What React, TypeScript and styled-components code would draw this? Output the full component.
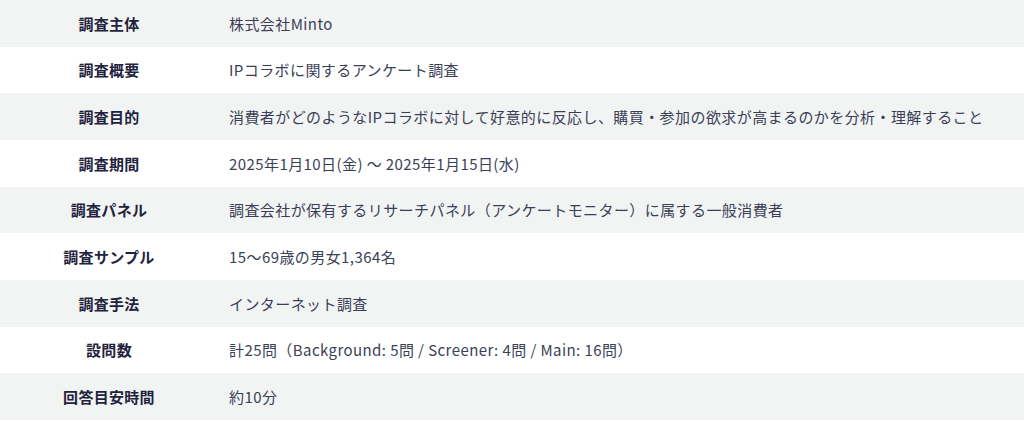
import * as React from 'react';
import styled, { createGlobalStyle } from 'styled-components';

const GlobalStyle = createGlobalStyle`
  html, body {
    margin: 0;
    padding: 0;
    background: #ffffff;
  }
  body {
    font-family: 'Noto Sans CJK JP', 'Noto Sans', sans-serif;
    color: #2c3049;
  }
`;

const Table = styled.div`
  width: 1024px;
  display: flex;
  flex-direction: column;
`;

const Row = styled.div<{ $shaded: boolean }>`
  display: grid;
  grid-template-columns: 218px 1fr;
  column-gap: 11px;
  align-items: center;
  height: 46.67px;
  background: ${(p) => (p.$shaded ? '#f2f3f3' : '#ffffff')};
`;

const Label = styled.div`
  text-align: center;
  font-size: 15px;
  font-weight: 700;
  color: #1f233d;
  letter-spacing: 0.02em;
`;

const Value = styled.div`
  font-size: 15px;
  font-weight: 400;
  color: #3b3f56;
  letter-spacing: 0.028em;
  white-space: nowrap;
`;

const rows: [string, string][] = [
  ['調査主体', '株式会社Minto'],
  ['調査概要', 'IPコラボに関するアンケート調査'],
  ['調査目的', '消費者がどのようなIPコラボに対して好意的に反応し、購買・参加の欲求が高まるのかを分析・理解すること'],
  ['調査期間', '2025年1月10日(金) ～ 2025年1月15日(水)'],
  ['調査パネル', '調査会社が保有するリサーチパネル（アンケートモニター）に属する一般消費者'],
  ['調査サンプル', '15～69歳の男女1,364名'],
  ['調査手法', 'インターネット調査'],
  ['設問数', '計25問（Background: 5問 / Screener: 4問 / Main: 16問）'],
  ['回答目安時間', '約10分'],
];

const App: React.FC = () => (
  <>
    <GlobalStyle />
    <Table>
      {rows.map(([label, value], i) => (
        <Row key={label} $shaded={i % 2 === 0}>
          <Label>{label}</Label>
          <Value>{value}</Value>
        </Row>
      ))}
    </Table>
  </>
);

export default App;
